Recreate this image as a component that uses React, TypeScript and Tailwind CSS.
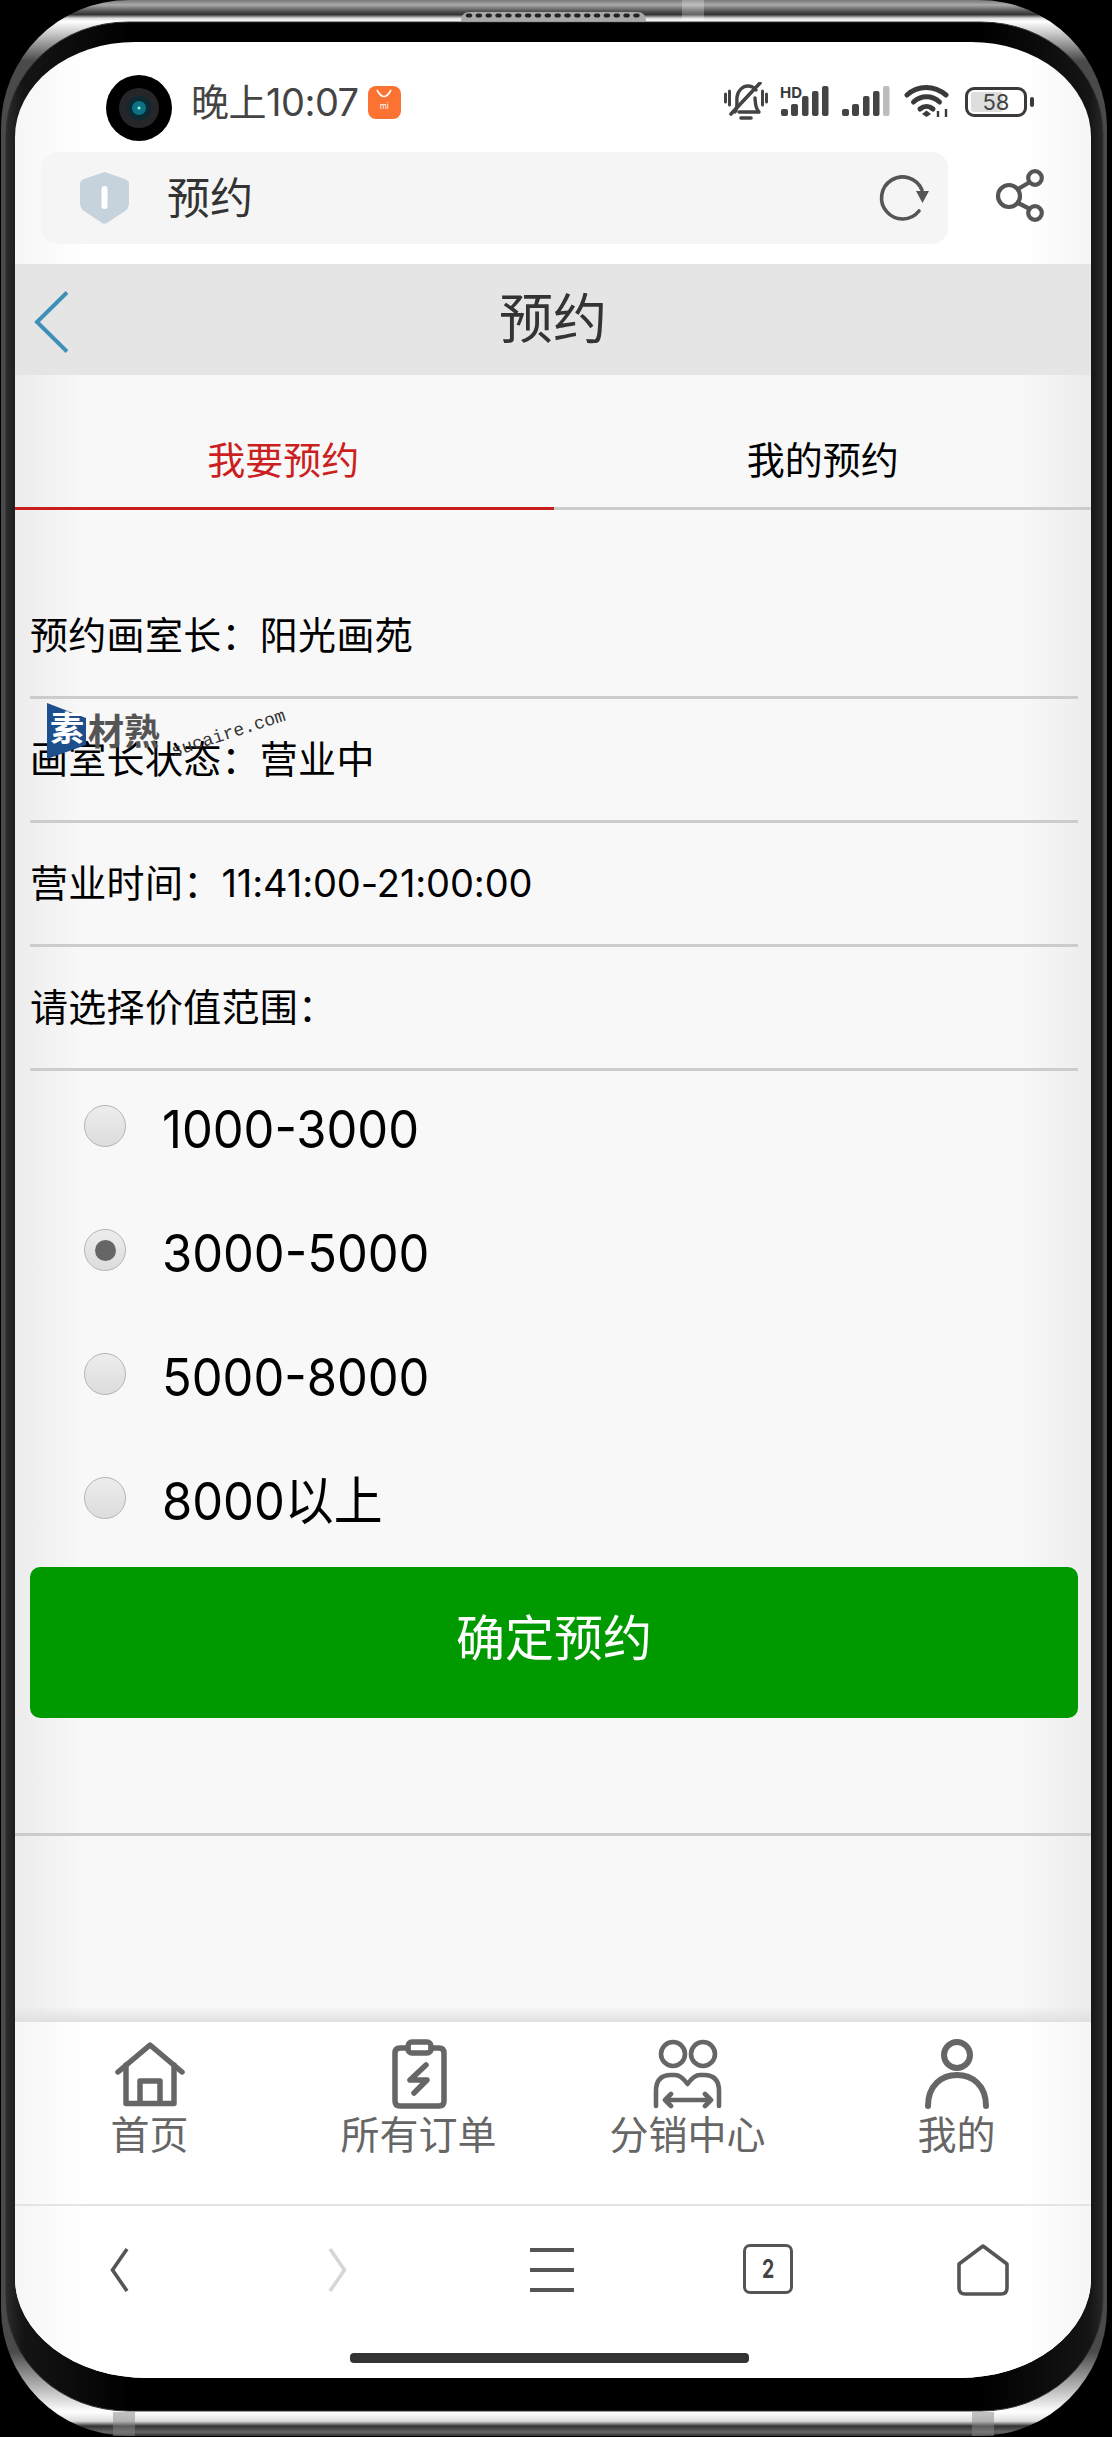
import React from "react";

const FONT = "font-[Inter,'Noto_Sans_CJK_SC',sans-serif]";

function Frame() {
  const dots = Array.from({ length: 18 }, (_, i) => 469 + i * 9.85);
  return (
    <svg className="absolute left-0 top-0" width="1112" height="2437" viewBox="0 0 1112 2437">
      <defs>
        <linearGradient id="band" gradientUnits="userSpaceOnUse" x1="0" y1="0" x2="0" y2="2437">
          <stop offset="0" stopColor="#777" />
          <stop offset="0.002" stopColor="#aaa" />
          <stop offset="0.0045" stopColor="#555" />
          <stop offset="0.006" stopColor="#333" />
          <stop offset="0.0075" stopColor="#ddd" />
          <stop offset="0.0088" stopColor="#fff" />
          <stop offset="0.025" stopColor="#4a4a4a" />
          <stop offset="0.965" stopColor="#4a4a4a" />
          <stop offset="0.9897" stopColor="#fff" />
          <stop offset="0.9935" stopColor="#ddd" />
          <stop offset="0.9955" stopColor="#333" />
          <stop offset="0.998" stopColor="#666" />
          <stop offset="1" stopColor="#222" />
        </linearGradient>
        <linearGradient id="inner" gradientUnits="userSpaceOnUse" x1="0" y1="0" x2="1112" y2="0">
          <stop offset="0.005" stopColor="#2c2c2c" />
          <stop offset="0.02" stopColor="#151515" />
          <stop offset="0.12" stopColor="#000" />
          <stop offset="0.88" stopColor="#000" />
          <stop offset="0.98" stopColor="#151515" />
          <stop offset="0.995" stopColor="#2c2c2c" />
        </linearGradient>
      </defs>
      <rect x="1" y="0" width="1106" height="2436" rx="128" ry="128" fill="url(#band)" />
      <rect x="6" y="22" width="1097" height="2389" rx="122" ry="112" fill="url(#inner)" stroke="#333" strokeWidth="1" />
      <rect x="682" y="0" width="22" height="21" fill="#fff" opacity="0.25" />
      <rect x="113" y="2412" width="22" height="24" fill="#888" opacity="0.5" />
      <rect x="972" y="2412" width="22" height="24" fill="#888" opacity="0.5" />
      <path d="M461 21 Q461 12 470 12 H637 Q646 12 646 21 Z" fill="#a8a8a8" />
      {dots.map((x) => (
        <rect key={x} x={x - 3.2} y="13.5" width="6.4" height="4" rx="2" fill="#222" />
      ))}
    </svg>
  );
}

function Camera() {
  return (
    <svg width="66" height="66" viewBox="0 0 66 66" className="mt-[12px] shrink-0">
      <circle cx="33" cy="33" r="33" fill="#000" />
      <circle cx="33" cy="33" r="20" fill="#26262a" />
      <circle cx="33" cy="33" r="12" fill="#0b2a33" />
      <circle cx="33" cy="33" r="7" fill="#0e6f85" />
      <circle cx="33" cy="33" r="1.5" fill="#8fd" />
    </svg>
  );
}

function MiIcon() {
  return (
    <div className="relative ml-[9px] flex h-[33px] w-[33px] shrink-0 flex-col items-center rounded-[8px] bg-[#fb7233]">
      <svg width="20" height="12" viewBox="0 0 20 12" className="mt-[3px]">
        <path d="M3 1 Q10 14 17 1" fill="none" stroke="#fff" strokeWidth="1.6" />
      </svg>
      <span className="mt-[1px] text-[8px] leading-[9px] text-white">mi</span>
    </div>
  );
}

function Bell() {
  return (
    <svg width="44" height="40" viewBox="0 0 44 40" fill="none" stroke="#444" strokeLinecap="round" strokeLinejoin="round">
      <path d="M1.5 12 V20 M5.5 9 V23 M38.5 9 V23 M42.5 12 V20" strokeWidth="3" />
      <path d="M11 30 C14 26 12.5 20 13 15 C14 8 19 4 24 4 C28 4 30 5.5 32 8 M31 16 C31.5 21 31 26 35 30 H15" strokeWidth="3.4" />
      <path d="M7 32 L36 1" strokeWidth="3.6" />
      <path d="M17 36 H27" strokeWidth="3.6" />
    </svg>
  );
}

function Bars({ last }: { last: string }) {
  return (
    <svg width="50" height="32" viewBox="0 0 50 32">
      <rect x="0" y="23" width="7" height="7" rx="2" fill="#444" />
      <rect x="10" y="18" width="7" height="12" rx="2" fill="#444" />
      <rect x="21" y="10" width="6.5" height="20" rx="2" fill="#444" />
      <rect x="31" y="5" width="6.5" height="25" rx="2" fill="#444" />
      <rect x="41" y="0" width="6.5" height="30" rx="2" fill={last} />
    </svg>
  );
}

function Wifi() {
  return (
    <svg width="46" height="36" viewBox="0 0 46 36" fill="none" stroke="#3a3a3a" strokeWidth="5" strokeLinecap="round">
      <path d="M3 11 C14 1 30 1 42 11" />
      <path d="M9.5 18 C17 11 28 11 35.5 18" />
      <path d="M16 25 C20 21.5 25 21.5 29 25" />
      <path d="M18 30 L22.5 26.5 L27 30 L22.5 33 Z" fill="#3a3a3a" stroke="none" />
      <path d="M34 27 V33 M42 25 V33" strokeWidth="2.4" strokeLinecap="butt" />
    </svg>
  );
}

function Battery() {
  return (
    <div className="ml-[15px] flex items-center">
      <div className="relative flex h-[30px] w-[62px] items-center justify-center rounded-[9px] border-[3px] border-[#3a3a3a]">
        <div className="absolute bottom-[2px] left-[3px] top-[2px] w-[32px] rounded-[3px] bg-[#dedede]" />
        <span className="relative text-[22px] leading-none text-[#444]">58</span>
      </div>
      <div className="ml-[3px] h-[10px] w-[4px] rounded-[2px] bg-[#3a3a3a]" />
    </div>
  );
}

function StatusBar() {
  return (
    <div className="flex h-[110px] items-center pl-[91px] pr-[57px] pt-[10px]">
      <Camera />
      <span className="ml-[19px] text-[38px] leading-none tracking-[-0.5px] text-[#444]">晚上10:07</span>
      <MiIcon />
      <div className="ml-auto flex items-center">
        <Bell />
        <div className="relative ml-[11px] flex h-[32px] w-[52px] items-end justify-end">
          <span className="absolute left-[1px] top-[-1px] text-[15px] font-bold leading-none text-[#3a3a3a]">HD</span>
          <Bars last="#444" />
        </div>
        <div className="ml-[11px]">
          <Bars last="#bdbdbd" />
        </div>
        <div className="ml-[12px]">
          <Wifi />
        </div>
        <Battery />
      </div>
    </div>
  );
}

function UrlRow() {
  return (
    <div className="flex h-[112px] items-start pl-[26px]">
      <div className="flex h-[92px] w-[907px] items-center rounded-[16px] bg-[#f5f5f5] pl-[39px] pr-[18px]">
        <svg width="49" height="52" viewBox="0 0 49 52" className="shrink-0">
          <path d="M24.5 0 L45 7 Q49 8.5 49 12 V31 Q49 36 45 39 L27 51 Q24.5 52.5 22 51 L4 39 Q0 36 0 31 V12 Q0 8.5 4 7 Z" fill="#c6d3dd" />
          <rect x="21.5" y="14" width="6" height="23" rx="3" fill="#fff" />
        </svg>
        <span className="ml-[38px] text-[43px] leading-none text-[#333]">预约</span>
        <svg width="52" height="50" viewBox="0 0 52 50" fill="none" className="ml-auto mt-[-2px] shrink-0">
          <path d="M44 18 A21 21 0 1 0 41 39" stroke="#555" strokeWidth="3.6" strokeLinecap="round" />
          <path d="M38 19 H51 L44.5 31 Z" fill="#555" />
        </svg>
      </div>
      <svg width="50" height="56" viewBox="0 0 50 56" fill="none" stroke="#555" strokeWidth="4.2" className="ml-[47px] mt-[16px] shrink-0">
        <circle cx="14" cy="28" r="11" />
        <circle cx="40" cy="10" r="6.8" />
        <circle cx="40" cy="45" r="6.8" />
        <path d="M23 21 L35 14 M23 35 L35 41" />
      </svg>
    </div>
  );
}

function Header() {
  return (
    <div className="relative flex h-[111px] items-center justify-center bg-[#e5e5e5]">
      <svg width="34" height="62" viewBox="0 0 34 62" fill="none" className="absolute left-[19px] top-[27px]">
        <path d="M33 1.5 L3 31 L33 60.5" stroke="#3f8fb8" strokeWidth="4" />
      </svg>
      <span className="text-[54px] leading-none text-[#333]">预约</span>
    </div>
  );
}

function Tabs() {
  return (
    <div className="flex h-[135px] shrink-0">
      <div className="flex flex-1 items-end justify-center border-b-[3px] border-[#c81e1e] pb-[22px] pr-[2px] text-[38px] leading-[50px] text-[#cc1f1f]">
        我要预约
      </div>
      <div className="flex flex-1 items-end justify-center border-b-[3px] border-[#ccc] pb-[22px] pl-[1px] text-[38px] leading-[50px] text-black">
        我的预约
      </div>
    </div>
  );
}

function InfoRow({ children }: { children: React.ReactNode }) {
  return (
    <div className="flex h-[124px] items-center border-b-[3px] border-[#ccc] pb-[1px] text-[38px] leading-none tracking-[0.3px] text-black">
      <span>{children}</span>
    </div>
  );
}

function Radio({ label, checked }: { label: string; checked?: boolean }) {
  return (
    <div className="flex h-[124px] items-center pb-[6px]">
      <div className="ml-[54px] mt-[-8px] flex h-[42px] w-[42px] shrink-0 items-center justify-center rounded-full border border-[#b5b5b5] bg-gradient-to-b from-[#ededed] to-[#dcdcdc]">
        {checked && <div className="h-[21px] w-[21px] rounded-full bg-[#666]" />}
      </div>
      <span className="ml-[36px] inline-block origin-left scale-x-[0.94] text-[52px] leading-none text-black">{label}</span>
    </div>
  );
}

function Watermark() {
  return (
    <div className="absolute left-[32px] top-[328px] h-[60px] w-[250px]">
      <svg width="40" height="56" viewBox="0 0 40 56" className="absolute left-0 top-0">
        <path d="M0 0 L39 15 V42 L0 56 Z" fill="#1d4f8c" />
      </svg>
      <span className="absolute left-[3px] top-[9px] text-[34px] font-bold leading-none text-white">素</span>
      <span className="absolute left-[41px] top-[11px] text-[36px] font-bold leading-none text-[#555]">材熟</span>
      <span className="absolute left-[125px] top-[40px] origin-left -rotate-[18deg] font-['Liberation_Mono',monospace] text-[18px] leading-none text-[#333]">
        sucaire.com
      </span>
    </div>
  );
}

function Main() {
  return (
    <div className="relative flex flex-1 flex-col bg-[linear-gradient(90deg,#ececec_0,#f8f8f8_70px,#f8f8f8_1005px,#ececec_1076px)]">
      <Tabs />
      <div className="mt-[65px] pl-[15px] pr-[13px]">
        <InfoRow>预约画室长：阳光画苑</InfoRow>
        <InfoRow>画室长状态：营业中</InfoRow>
        <InfoRow>
          营业时间：<span className="tracking-[-0.1px]">11:41:00-21:00:00</span>
        </InfoRow>
        <InfoRow>请选择价值范围：</InfoRow>
        <div>
          <Radio label="1000-3000" />
          <Radio label="3000-5000" checked />
          <Radio label="5000-8000" />
          <Radio label="8000以上" />
        </div>
        <div className="flex h-[151px] items-center justify-center rounded-[10px] bg-[#009900] pb-[8px] text-[49px] leading-none text-white">
          确定预约
        </div>
      </div>
      <div className="mt-[115px] h-[3px] bg-[#ccc]" />
      <div className="mt-auto h-[16px] bg-gradient-to-b from-transparent to-[#e0e0e0]" />
      <Watermark />
    </div>
  );
}

function TabItem({ icon, label }: { icon: React.ReactNode; label: string }) {
  return (
    <div className="flex flex-1 flex-col items-center pt-[17px]">
      {icon}
      <span className="mt-[6px] text-[39px] leading-[40px] text-[#666]">{label}</span>
    </div>
  );
}

function TabBar() {
  const p = { fill: "none", stroke: "#666", strokeLinecap: "round", strokeLinejoin: "round" } as const;
  return (
    <div className="flex h-[184px] shrink-0 border-b-[2px] border-[#e4e4e4] bg-[linear-gradient(90deg,#f6f6f6_0,#fff_70px,#fff_1005px,#f6f6f6_1076px)]">
      <TabItem
        label="首页"
        icon={
          <svg width="70" height="70" viewBox="0 0 70 70" {...p} strokeWidth="5.5">
            <path d="M3 33 L35 6 L67 33" />
            <path d="M11 26 V64.5 H59 V26" />
            <path d="M25 64 V42 H45 V64" />
          </svg>
        }
      />
      <TabItem
        label="所有订单"
        icon={
          <svg width="70" height="70" viewBox="0 0 70 70" {...p} strokeWidth="5.5">
            <path d="M24 9 H16 Q11 9 11 14 V62 Q11 67 16 67 H55 Q60 67 60 62 V14 Q60 9 55 9 H47" />
            <rect x="24" y="3" width="23" height="11" rx="4" />
            <path d="M42 26 L26 41 H43 L30 54" />
          </svg>
        }
      />
      <TabItem
        label="分销中心"
        icon={
          <svg width="80" height="70" viewBox="0 0 80 70" {...p} strokeWidth="4.6" className="translate-x-[1px]">
            <circle cx="24" cy="15" r="12" />
            <circle cx="54" cy="15" r="12" />
            <path d="M7 67 V52 Q7 36 22 36 H26 Q32 36 38.5 45 Q45 36 51 36 H55 Q70 36 70 52 V67" />
            <path d="M16 61 H62 M22 55 L16 61 L22 67 M56 55 L62 61 L56 67" />
          </svg>
        }
      />
      <TabItem
        label="我的"
        icon={
          <svg width="70" height="70" viewBox="0 0 70 70" {...p} strokeWidth="6">
            <circle cx="35" cy="16" r="13" />
            <path d="M6 67 C6 46 20 36 35 36 C50 36 64 46 64 67" />
          </svg>
        }
      />
    </div>
  );
}

function BrowserBar() {
  return (
    <div className="relative flex h-[172px] shrink-0 items-start bg-[linear-gradient(90deg,#f6f6f6_0,#fff_70px,#fff_1005px,#f6f6f6_1076px)] pl-[95px] pt-[38px]">
      <svg width="20" height="46" viewBox="0 0 20 46" fill="none" stroke="#555" strokeWidth="3.6" className="mt-[3px] shrink-0">
        <path d="M17 2 L2.5 23 L17 44" />
      </svg>
      <svg width="20" height="46" viewBox="0 0 20 46" fill="none" stroke="#d6d6d6" strokeWidth="3.6" className="ml-[197px] mt-[3px] shrink-0">
        <path d="M3 2 L17.5 23 L3 44" />
      </svg>
      <div className="ml-[183px] mt-[4px] flex h-[44px] w-[44px] shrink-0 flex-col justify-between">
        <div className="h-[4px] bg-[#555]" />
        <div className="h-[4px] bg-[#555]" />
        <div className="h-[4px] bg-[#555]" />
      </div>
      <div className="ml-[169px] flex h-[50px] w-[50px] shrink-0 items-center justify-center rounded-[7px] border-[3.5px] border-[#555]">
        <span className="inline-block scale-x-75 text-[26px] font-bold leading-none text-[#444]">2</span>
      </div>
      <svg width="52" height="52" viewBox="0 0 52 52" fill="none" stroke="#555" strokeWidth="3.6" strokeLinejoin="round" className="ml-[164px] shrink-0">
        <path d="M26 2 L50 20 V44 Q50 50 44 50 H8 Q2 50 2 44 V20 Z" />
      </svg>
      <div className="absolute bottom-[15px] left-[335px] h-[10px] w-[399px] rounded-[4px] bg-[#333]" />
    </div>
  );
}

export default function App() {
  return (
    <div className={`relative h-[2437px] w-[1112px] overflow-hidden bg-black pl-[15px] pt-[42px] ${FONT}`}>
      <Frame />
      <div className="relative flex h-[2336px] w-[1076px] flex-col overflow-hidden rounded-b-[132px_100px] rounded-t-[120px_95px] bg-[linear-gradient(90deg,#f6f6f6_0,#fff_70px,#fff_1005px,#f6f6f6_1076px)]">
        <StatusBar />
        <UrlRow />
        <Header />
        <Main />
        <TabBar />
        <BrowserBar />
      </div>
    </div>
  );
}
